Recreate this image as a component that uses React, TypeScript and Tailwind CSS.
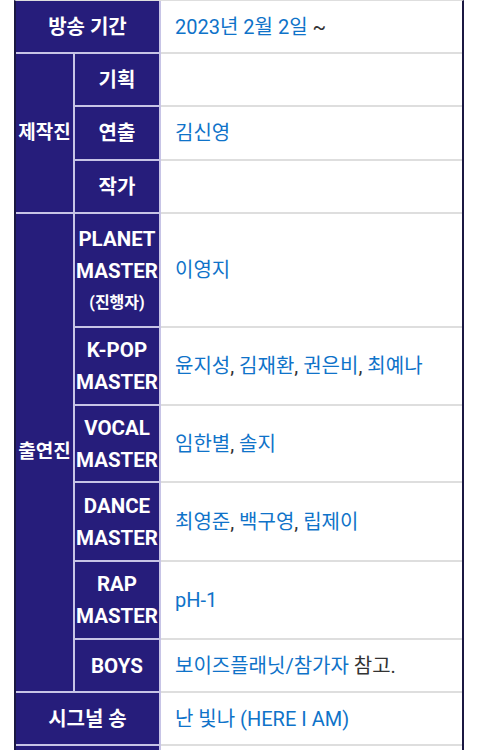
import React from 'react';

const font = { fontFamily: 'Roboto, "Noto Sans CJK KR", sans-serif' };

const Link = ({ children }: { children: React.ReactNode }) => (
  <span className="text-[#0f73c9]">{children}</span>
);

const Names = ({ names }: { names: string[] }) => (
  <>
    {names.map((n, i) => (
      <React.Fragment key={n}>
        <Link>{n}</Link>
        {i < names.length - 1 && <span className="text-[#333]">, </span>}
      </React.Fragment>
    ))}
  </>
);

// one sub-row inside a group: sub header + data cell
const SubRow = ({ h, label, children }: { h: string; label: React.ReactNode; children?: React.ReactNode }) => (
  <div className={`flex ${h}`}>
    <div className="w-[86px] shrink-0 bg-[#261d7b] border-r-2 border-b-2 border-[#c7c4e6] flex flex-col items-center justify-center text-white font-bold text-center">
      {label}
    </div>
    <div className="flex-1 bg-white border-b-2 border-[#dedede] flex items-center pl-[14px] text-[20px]">
      <span>{children}</span>
    </div>
  </div>
);

const FullRow = ({ h, label, children }: { h: string; label: string; children?: React.ReactNode }) => (
  <div className={`flex ${h}`}>
    <div className="w-[145px] shrink-0 bg-[#261d7b] border-r-2 border-b-2 border-[#c7c4e6] flex items-center justify-center text-white font-bold text-[20px]">
      {label}
    </div>
    <div className="flex-1 bg-white border-b-2 border-[#dedede] flex items-center pl-[14px] text-[20px]">
      <span>{children}</span>
    </div>
  </div>
);

const Eng = ({ lines, note }: { lines: string[]; note?: string }) => (
  <div className="flex flex-col items-center text-[20.5px] leading-[32px]">
    {lines.map((l) => (
      <span key={l}>{l}</span>
    ))}
    {note && <span className="text-[16px] leading-[30px] mt-[1px]">{note}</span>}
  </div>
);

const Group = ({ label, children }: { label: string; children: React.ReactNode }) => (
  <div className="flex">
    <div className="w-[59px] shrink-0 bg-[#261d7b] border-r-2 border-b-2 border-[#c7c4e6] flex items-center justify-center text-white font-bold text-[19px] whitespace-nowrap">
      {label}
    </div>
    <div className="flex-1 flex flex-col">{children}</div>
  </div>
);

export default function App() {
  return (
    <div className="w-[480px] h-[750px] bg-white overflow-hidden" style={font}>
      <div className="ml-[14px] w-[450px] border-x-2 border-[#1b1842] border-t border-t-[#dedede]">
        <FullRow h="h-[53px]" label="방송 기간">
          <Link>2023년 2월 2일</Link>
          <span className="text-[#333]"> ~</span>
        </FullRow>

        <Group label="제작진">
          <SubRow h="h-[53px]" label={<span className="text-[20px]">기획</span>} />
          <SubRow h="h-[54px]" label={<span className="text-[20px]">연출</span>}>
            <Link>김신영</Link>
          </SubRow>
          <SubRow h="h-[53px]" label={<span className="text-[20px]">작가</span>} />
        </Group>

        <Group label="출연진">
          <SubRow h="h-[114px]" label={<Eng lines={['PLANET', 'MASTER']} note="(진행자)" />}>
            <Link>이영지</Link>
          </SubRow>
          <SubRow h="h-[78px]" label={<Eng lines={['K-POP', 'MASTER']} />}>
            <Names names={['윤지성', '김재환', '권은비', '최예나']} />
          </SubRow>
          <SubRow h="h-[77px]" label={<Eng lines={['VOCAL', 'MASTER']} />}>
            <Names names={['임한별', '솔지']} />
          </SubRow>
          <SubRow h="h-[79px]" label={<Eng lines={['DANCE', 'MASTER']} />}>
            <Names names={['최영준', '백구영', '립제이']} />
          </SubRow>
          <SubRow h="h-[78px]" label={<Eng lines={['RAP', 'MASTER']} />}>
            <Link>pH-1</Link>
          </SubRow>
          <SubRow h="h-[53px]" label={<Eng lines={['BOYS']} />}>
            <Link>보이즈플래닛/참가자</Link>
            <span className="text-[#333]"> 참고.</span>
          </SubRow>
        </Group>

        <FullRow h="h-[53px]" label="시그널 송">
          <Link>난 빛나 (HERE I AM)</Link>
        </FullRow>
        <FullRow h="h-[53px]" label="" />
      </div>
    </div>
  );
}
